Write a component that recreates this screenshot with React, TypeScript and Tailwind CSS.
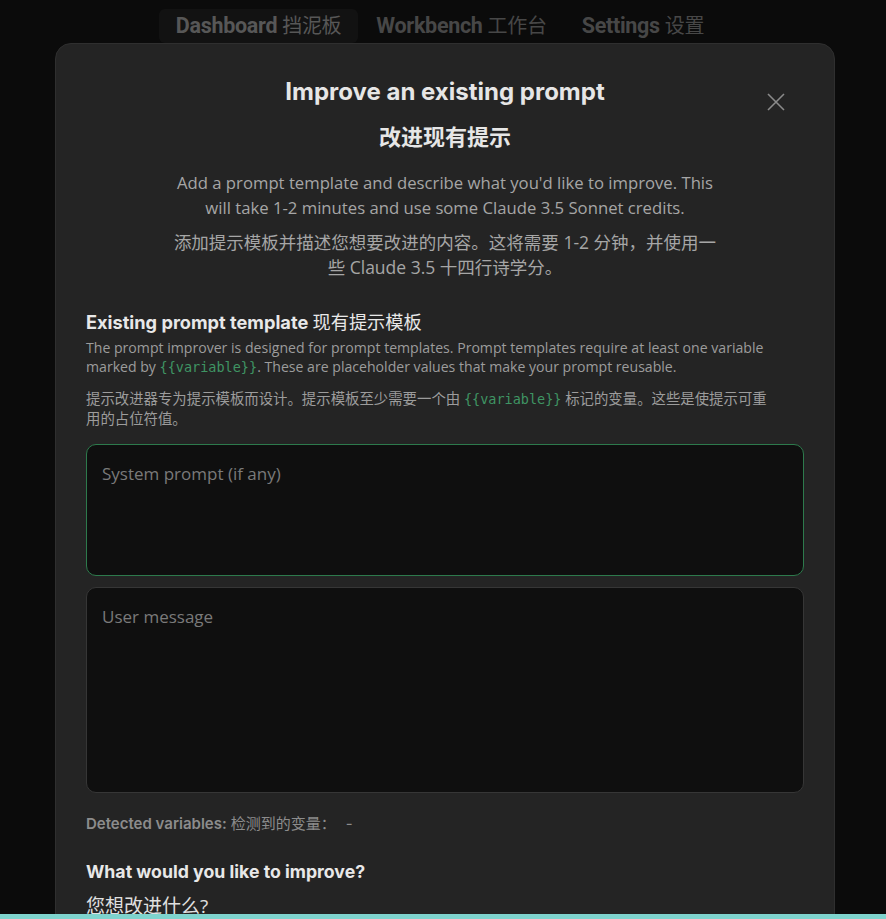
import React from 'react';

const navItems = [
  { en: 'Dashboard', zh: '挡泥板', active: true },
  { en: 'Workbench', zh: '工作台', active: false },
  { en: 'Settings', zh: '设置', active: false },
];

const Code: React.FC<{ children: React.ReactNode }> = ({ children }) => (
  <span className="text-[#3f9463] text-[13.5px]" style={{ fontFamily: '"DejaVu Sans Mono", monospace' }}>
    {children}
  </span>
);

const App: React.FC = () => {
  const body = '"Open Sans", "Noto Sans CJK SC", sans-serif';
  const head = 'Inter, "Noto Sans CJK SC", sans-serif';

  return (
    <div className="relative h-[919px] overflow-hidden bg-[#0b0b0b]" style={{ fontFamily: body }}>
      {/* top nav */}
      <nav
        className="flex justify-center gap-[1px] pt-[9px] pr-[6px]"
        style={{ fontFamily: 'Roboto, "Noto Sans CJK SC", sans-serif' }}
      >
        {navItems.map((item) => (
          <div
            key={item.en}
            className={`h-[34px] px-[17px] flex items-center rounded-md text-[21.5px] font-bold tracking-[-0.3px] ${item.active ? 'bg-[#121212] text-[#575757]' : 'text-[#474747]'}`}
          >
            {item.en}
            <span className="ml-[5px] font-normal text-[20px]">{item.zh}</span>
          </div>
        ))}
      </nav>

      {/* modal */}
      <div className="relative ml-[55px] w-[780px] h-[900px] rounded-[16px] border border-[#2f2f2f] bg-[#242424] px-[30px] pt-[33px]">
        <button className="absolute right-[48px] top-[48px] text-[#8a8a8a]">
          <svg width="20" height="20" viewBox="0 0 20 20" fill="none" stroke="currentColor" strokeWidth="1.6">
            <path d="M2 2 L18 18 M18 2 L2 18" />
          </svg>
        </button>

        <h1 className="text-center text-[24px] leading-[30px] font-bold text-[#e6e6e6]" style={{ fontFamily: head }}>
          Improve an existing prompt
        </h1>
        <h2 className="mt-[15px] text-center text-[22px] leading-[30px] font-bold text-[#e6e6e6]" style={{ fontFamily: head }}>
          改进现有提示
        </h2>

        <p className="mt-[18px] text-center text-[16.7px] leading-[25px] text-[#a6a6a6] whitespace-nowrap">
          Add a prompt template and describe what you'd like to improve. This
          <br />
          will take 1-2 minutes and use some Claude 3.5 Sonnet credits.
        </p>
        <p className="mt-[10px] text-center text-[17.5px] leading-[25px] text-[#a6a6a6] whitespace-nowrap">
          添加提示模板并描述您想要改进的内容。这将需要 1-2 分钟，并使用一
          <br />
          些 Claude 3.5 十四行诗学分。
        </p>

        <h3 className="mt-[30px] text-[18.2px] leading-[24px] font-bold text-[#e8e8e8]" style={{ fontFamily: head }}>
          Existing prompt template <span className="font-normal">现有提示模板</span>
        </h3>
        <p className="mt-[4px] text-[14.1px] leading-[19px] text-[#9c9c9c] whitespace-nowrap">
          The prompt improver is designed for prompt templates. Prompt templates require at least one variable
          <br />
          marked by <Code>{'{{variable}}'}</Code>. These are placeholder values that make your prompt reusable.
        </p>
        <p className="mt-[12px] text-[14.4px] leading-[20px] text-[#9c9c9c] whitespace-nowrap">
          提示改进器专为提示模板而设计。提示模板至少需要一个由 <Code>{'{{variable}}'}</Code> 标记的变量。这些是使提示可重
          <br />
          用的占位符值。
        </p>

        <div className="mt-[15px] flex flex-col gap-[11px]">
          <div className="h-[132px] rounded-[10px] border border-[#2d7a4c] bg-[#0f0f0f] px-[15px] pt-[17px] text-[17px] leading-[24px] text-[#7a7a7a]">
            System prompt (if any)
          </div>
          <div className="h-[206px] rounded-[10px] border border-[#363636] bg-[#0f0f0f] px-[15px] pt-[17px] text-[17px] leading-[24px] text-[#7a7a7a]">
            User message
          </div>
        </div>

        <div className="mt-[20px] flex items-center text-[15px] leading-[22px] text-[#8c8c8c]" style={{ fontFamily: head }}>
          <span className="font-semibold">Detected variables:</span>
          <span className="ml-[4px]">检测到的变量：</span>
          <span className="ml-[10px]">-</span>
        </div>

        <h3 className="mt-[25px] text-[17.7px] leading-[24px] font-bold text-[#e8e8e8]" style={{ fontFamily: head }}>
          What would you like to improve?
        </h3>
        <p className="mt-[9px] text-[19px] leading-[26px] text-[#e0e0e0]">您想改进什么?</p>
      </div>

      {/* bottom accent bar */}
      <div className="absolute bottom-0 left-0 right-0 h-[5px] bg-[#7ed3cd]" />
    </div>
  );
};

export default App;
